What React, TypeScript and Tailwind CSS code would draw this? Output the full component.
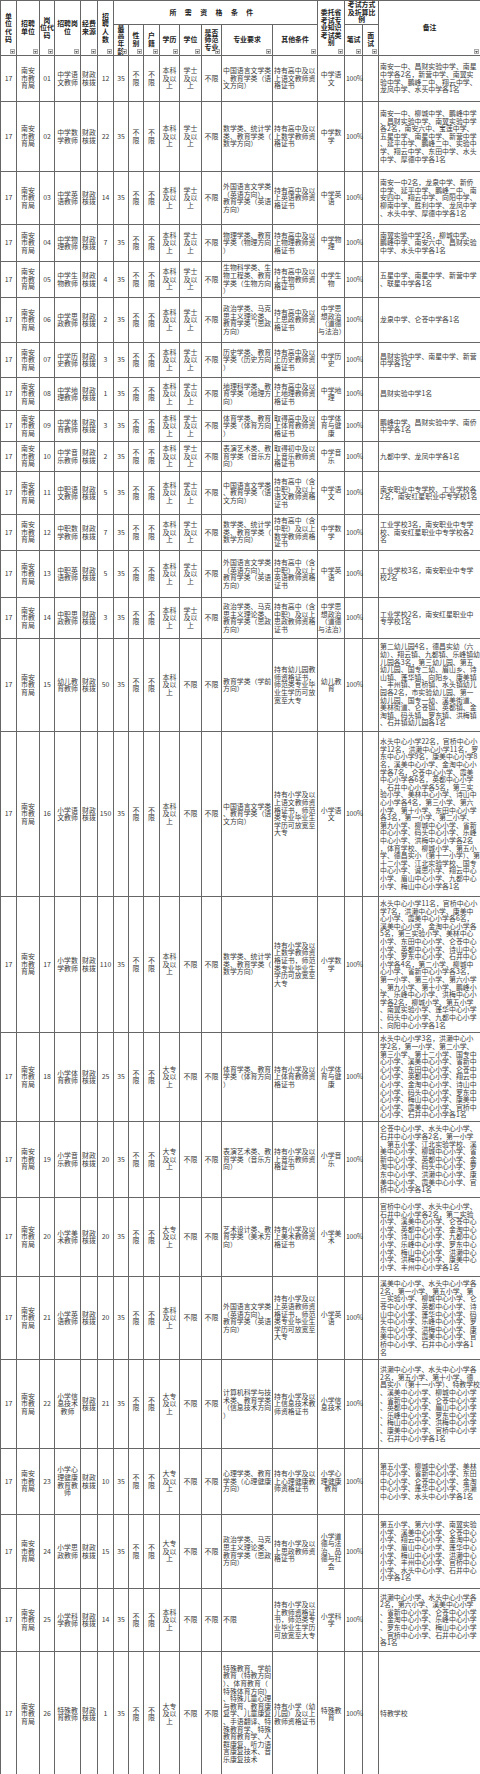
import type { ReactNode } from 'react'

interface Post {
  code: string
  name: string
  count: string
  edu: string
  degree: string
  major: string
  other: string
  category: string
  remark: string
  h: string
}

const BK = '本科\n及以\n上'
const DZ = '大专\n及以\n上'
const XS = '学士\n及以\n上'

const posts: Post[] = [
  { code: '01', name: '中学语\n文教师', count: '12', edu: BK, degree: XS, major: '中国语言文学类、教育学类（语文方向）', other: '持有高中及以上语文教师资格证书', category: '中学语文', remark: '南安一中、昌财实验中学、南星中学各2名，新营中学、南翼实验中学、鹏峰二中、翔云中学、龙凤中学、水头中学各1名', h: 'h-[46px]' },
  { code: '02', name: '中学数\n学教师', count: '22', edu: BK, degree: XS, major: '数学类、统计学类、教育学类（数学方向）', other: '持有高中及以上数学教师资格证书', category: '中学数学', remark: '南安一中、柳城中学、鹏峰中学、昌财实验中学、南翼实验中学各2名，南安六中、宝莲中学、五星中学、南星中学、新营中学、延平中学、鹏峰二中、实验中学、翔云中学、东田中学、水头中学、厚德中学各1名', h: 'h-[70px]' },
  { code: '03', name: '中学英\n语教师', count: '14', edu: BK, degree: XS, major: '外国语言文学类（英语方向）、教育学类（英语方向）', other: '持有高中及以上英语教师资格证书', category: '中学英语', remark: '南安一中2名，龙泉中学、新侨中学、延平中学、鹏峰二中、南安四中、翔云中学、向阳中学、柳南中学、胜利中学、龙凤中学、水头中学、厚德中学各1名', h: 'h-[53px]' },
  { code: '04', name: '中学物\n理教师', count: '7', edu: BK, degree: XS, major: '物理学类、教育学类（物理方向）', other: '持有高中及以上物理教师资格证书', category: '中学物理', remark: '南翼实验中学2名，柳城中学、鹏峰中学、南安六中、昌财实验中学、水头中学各1名', h: 'h-[37px]' },
  { code: '05', name: '中学生\n物教师', count: '4', edu: BK, degree: XS, major: '生物科学类、生物工程类、教育学类（生物方向）', other: '持有高中及以上生物教师资格证书', category: '中学生物', remark: '五星中学、南星中学、新营中学、联星中学各1名', h: 'h-[36px]' },
  { code: '06', name: '中学思\n政教师', count: '2', edu: BK, degree: XS, major: '政治学类、马克思主义理论类、教育学类（思政方向）', other: '持有高中及以上思政教师资格证书', category: '中学思想政治（道德与法治）', remark: '龙泉中学、仑苍中学各1名', h: 'h-[45px]' },
  { code: '07', name: '中学历\n史教师', count: '3', edu: BK, degree: XS, major: '历史学类、教育学类（历史方向）', other: '持有高中及以上历史教师资格证书', category: '中学历史', remark: '昌财实验中学、南星中学、新营中学各1名', h: 'h-[35px]' },
  { code: '08', name: '中学地\n理教师', count: '1', edu: BK, degree: XS, major: '地理科学类、教育学类（地理方向）', other: '持有高中及以上地理教师资格证书', category: '中学地理', remark: '昌财实验中学1名', h: 'h-[33px]' },
  { code: '09', name: '中学体\n育教师', count: '3', edu: BK, degree: XS, major: '体育学类、教育学类（体育方向）', other: '取得高中及以上体育教师资格证书', category: '中学体育与健康', remark: '鹏峰中学、昌财实验中学、南侨中学各1名', h: 'h-[31px]' },
  { code: '10', name: '中学音\n乐教师', count: '2', edu: BK, degree: XS, major: '表演艺术类、教育学类（音乐方向）', other: '取得初中及以上音乐教师资格证书', category: '中学音乐', remark: '九都中学、龙凤中学各1名', h: 'h-[30px]' },
  { code: '11', name: '中职语\n文教师', count: '5', edu: BK, degree: XS, major: '中国语言文学类、教育学类（语文方向）', other: '持有高中（含中职）及以上语文教师资格证书', category: '中学语文', remark: '南安职业中专学校、工业学校各2名，南安红星职业中专学校1名', h: 'h-[43px]' },
  { code: '12', name: '中职数\n学教师', count: '7', edu: BK, degree: XS, major: '数学类、统计学类、教育学类（数学方向）', other: '持有高中（含中职）及以上数学教师资格证书', category: '中学数学', remark: '工业学校3名，南安职业中专学校、南安红星职业中专学校各2名', h: 'h-[36px]' },
  { code: '13', name: '中职英\n语教师', count: '5', edu: BK, degree: XS, major: '外国语言文学类（英语方向）、教育学类（英语方向）', other: '持有高中（含中职）及以上英语教师资格证书', category: '中学英语', remark: '工业学校3名，南安职业中专学校2名', h: 'h-[47px]' },
  { code: '14', name: '中职思\n政教师', count: '3', edu: BK, degree: XS, major: '政治学类、马克思主义理论类、教育学类（思政方向）', other: '持有高中（含中职）及以上思政教师资格证书', category: '中学思想政治（道德与法治）', remark: '工业学校2名，南安红星职业中专学校1名', h: 'h-[41px]' },
  { code: '15', name: '幼儿教\n育教师', count: '50', edu: BK, degree: '不限', major: '教育学类（学前方向）', other: '持有幼儿园教师资格证书，师范类专业毕业生学历可放宽至大专', category: '幼儿教育', remark: '第二幼儿园4名，德昌实幼（六幼）、翔云镇、九都镇、乐峰镇幼儿园各3名，第三幼儿园、第五幼儿园、国专二幼、眉山乡、诗山镇、蓬华镇、向阳乡、康美镇、丰州镇、官桥镇、水头镇幼儿园各2名，市实验幼儿园、第一幼儿园、国专一幼、溪美街道、美林街道、仑苍镇、英都镇、金淘镇、码头镇、罗东镇、洪梅镇、石井镇幼儿园各1名', h: 'h-[93px]' },
  { code: '16', name: '小学语\n文教师', count: '150', edu: BK, degree: '不限', major: '中国语言文学类、教育学类（语文方向）', other: '持有小学及以上语文教师资格证书，师范类专业毕业生学历可放宽至大专', category: '小学语文', remark: '水头中心小学22名，官桥中心小学12名，洪濑中心小学11名，罗东中心小学9名，康美中心小学8名，溪美中心小学、金淘中心小学各7名，仑苍中心小学、霞美中心小学各6名，英都中心小学、石井中心小学各5名，第三实验小学、美林中心小学、诗山中心小学各4名，第三小学、第六小学、第十小学、东田中心小学各3名，第一小学、第二小学、第九小学、柳城中心小学、省新中心小学、码头中心小学、乐峰中心小学、洪梅中心小学各2名，体育学校、柳城小学、第五小学、德昌实小（第十一小学）、第十二小学、江北实验学校、国专中心小学、诚思小学、翔云中心小学、眉山中心小学、九都中心小学、梅山中心小学各1名', h: 'h-[165px]' },
  { code: '17', name: '小学数\n学教师', count: '110', edu: BK, degree: '不限', major: '数学类、统计学类、教育学类（数学方向）', other: '持有小学及以上数学教师资格证书，师范类专业毕业生学历可放宽至大专', category: '小学数学', remark: '水头中心小学11名，官桥中心小学7名，洪濑中心小学、康美中心小学、霞美中心小学各6名，溪美中心小学、金淘中心小学各5名，第三实验小学、美林中心小学、东田中心小学、仑苍中心小学、英都中心小学、诗山中心小学、罗东中心小学、石井中心小学各4名，第二小学、柳城中心小学、省新中心小学各3名，第一小学、第三小学、第六小学、第九小学、第十小学、鹏峰小学、乐峰中心小学、洪梅中心小学各2名，柳城小学、第五小学、南翼实验小学、蓬华中心小学、码头中心小学、九都中心小学、向阳中心小学各1名', h: 'h-[136px]' },
  { code: '18', name: '小学体\n育教师', count: '25', edu: DZ, degree: '不限', major: '体育学类、教育学类（体育方向）', other: '持有小学及以上体育教师资格证书', category: '小学体育与健康', remark: '水头中心小学3名，洪濑中心小学2名，第一小学、第二小学、第三小学、第十二小学、国专中心小学、溪美中心小学、省新中心小学、东田中心小学、仑苍中心小学、英都中心小学、翔云中心小学、金淘中心小学、诗山中心小学、码头中心小学、罗东中心小学、梅山中心小学、康美中心小学、霞美中心小学、官桥中心小学、石井中心小学各1名', h: 'h-[89px]' },
  { code: '19', name: '小学音\n乐教师', count: '20', edu: DZ, degree: '不限', major: '表演艺术类、教育学类（音乐方向）', other: '持有小学及以上音乐教师资格证书', category: '小学音乐', remark: '仑苍中心小学、水头中心小学、石井中心小学各2名，第一小学、第五小学、江北实验学校、溪美中心小学、柳城中心小学、省新中心小学、英都中心小学、金淘中心小学、码头中心小学、罗东中心小学、洪濑中心小学、康美中心小学、霞美中心小学、官桥中心小学各1名', h: 'h-[76px]' },
  { code: '20', name: '小学美\n术教师', count: '20', edu: DZ, degree: '不限', major: '艺术设计类、教育学类（美术方向）', other: '持有小学及以上美术教师资格证书', category: '小学美术', remark: '官桥中心小学、水头中心小学、石井中心小学各2名，第二实验小学、溪美中心小学、仑苍中心小学、英都中心小学、金淘中心小学、诗山中心小学、九都中心小学、乐峰中心小学、罗东中心小学、梅山中心小学、洪濑中心小学、洪梅中心小学、康美中心小学、丰州中心小学各1名', h: 'h-[79px]' },
  { code: '21', name: '小学英\n语教师', count: '20', edu: BK, degree: '不限', major: '外国语言文学类（英语方向）、教育学类（英语方向）', other: '持有小学及以上英语教师资格证书，师范类专业毕业生学历可放宽至大专', category: '小学英语', remark: '溪美中心小学、水头中心小学各2名，第一小学、第五小学、第三实验小学、柳城中心小学、仑苍中心小学、英都中心小学、诗山中心小学、蓬华中心小学、码头中心小学、乐峰中心小学、罗东中心小学、洪梅中心小学、康美中心小学、霞美中心小学、官桥中心小学、石井中心小学各1名', h: 'h-[83px]' },
  { code: '22', name: '小学信\n息技术\n教师', count: '21', edu: DZ, degree: '不限', major: '计算机科学与技术类、教育学类（信息技术方向）', other: '持有小学及以上信息技术教师资格证书', category: '小学信息技术', remark: '洪濑中心小学、水头中心小学各2名，第五小学、第十小学、德昌实小（第十一小学）、特教学校、溪美中心小学、柳城中心小学、省新中心小学、仑苍中心小学、英都中心小学、眉山中心小学、乐峰中心小学、罗东中心小学、梅山中心小学、洪梅中心小学、康美中心小学、官桥中心小学、石井中心小学各1名', h: 'h-[89px]' },
  { code: '23', name: '小学心\n理健康\n教育教\n师', count: '10', edu: DZ, degree: '不限', major: '心理学类、教育学类（心理健康方向）', other: '持有小学及以上心理健康教师资格证书', category: '小学心理健康教育', remark: '第五小学、柳城中心小学、美林中心小学、省新中心小学、东田中心小学、仑苍中心小学、金淘中心小学、蓬华中心小学、洪濑中心小学、水头中心小学各1名', h: 'h-[66px]' },
  { code: '24', name: '小学思\n政教师', count: '15', edu: DZ, degree: '不限', major: '政治学类、马克思主义理论类、教育学类（思政方向）', other: '持有小学及以上思政教师资格证书', category: '小学道德与法治、品德与社会', remark: '第五小学、第六小学、南翼实验小学、溪美中心小学、仑苍中心小学、翔云中心小学、金淘中心小学、眉山中心小学、蓬华中心小学、梅山中心小学、洪濑中心小学、丰州中心小学、官桥中心小学、水头中心小学、石井中心小学各1名', h: 'h-[74px]' },
  { code: '25', name: '小学科\n学教师', count: '14', edu: BK, degree: '不限', major: '不限', other: '持有小学及以上教师资格证书，师范类专业毕业生学历可放宽至大专', category: '小学科学', remark: '洪濑中心小学、水头中心小学各2名，第六小学、溪美中心小学、省新中心小学、仑苍中心小学、金淘中心小学、乐峰中心小学、罗东中心小学、梅山中心小学、官桥中心小学、石井中心小学各1名', h: 'h-[63px]' },
  { code: '26', name: '特殊教\n育教师', count: '1', edu: DZ, degree: '不限', major: '特殊教育、学前教育（特教方向）、体育教育（特殊体育方向）、特殊儿童心理与教育、教育康复学、儿童康复、手语翻译、特殊教育学、特殊教育教育学、人群康复、听力语言康复技术、音乐康复技术', other: '持有小学（幼儿园）及以上教师资格证书', category: '特殊教育', remark: '特教学校', h: 'h-[125px]' },
]

function Th({ children, rowSpan, colSpan, filter = true, className = '' }: { children: ReactNode; rowSpan?: number; colSpan?: number; filter?: boolean; className?: string }) {
  return (
    <th
      rowSpan={rowSpan}
      colSpan={colSpan}
      className={`relative border border-[#666] p-0 align-middle text-center font-bold text-[#222] whitespace-pre-line ${className}`}
    >
      {children}
      {filter && (
        <span className="absolute right-[1px] bottom-[1px] flex h-[5px] w-[5px] items-center justify-center border border-[#aaa] bg-[#f3f3f3]">
          <svg width="3" height="2" viewBox="0 0 3 2"><path d="M0 0h3L1.5 2z" fill="#555" /></svg>
        </span>
      )}
    </th>
  )
}

function Td({ children, left = false, nowrap = false }: { children: ReactNode; left?: boolean; nowrap?: boolean }) {
  return (
    <td
      className={`border border-[#666] p-0 align-middle ${nowrap ? 'whitespace-nowrap tracking-[-0.3px]' : 'whitespace-pre-line'} ${left ? 'text-left pl-[1px]' : 'text-center'}`}
    >
      {children}
    </td>
  )
}

export default function App() {
  return (
    <div className="w-[480px] bg-white text-[#3a3a3a]" style={{ fontFamily: '"Noto Sans CJK SC", "Noto Sans", sans-serif' }}>
      <table className="w-[480px] table-fixed border-collapse text-[6.9px] leading-[7.6px] [line-break:anywhere]">
        <colgroup>
          <col className="w-[16px]" />
          <col className="w-[23px]" />
          <col className="w-[15px]" />
          <col className="w-[26px]" />
          <col className="w-[17px]" />
          <col className="w-[16px]" />
          <col className="w-[15px]" />
          <col className="w-[15px]" />
          <col className="w-[16px]" />
          <col className="w-[20px]" />
          <col className="w-[22px]" />
          <col className="w-[20px]" />
          <col className="w-[51px]" />
          <col className="w-[45px]" />
          <col className="w-[27px]" />
          <col className="w-[18px]" />
          <col className="w-[16px]" />
          <col className="w-[102px]" />
        </colgroup>
        <thead>
          <tr className="h-[23px]">
            <Th rowSpan={2}>{'单\n位\n代\n码'}</Th>
            <Th rowSpan={2}>{'招聘\n单位'}</Th>
            <Th rowSpan={2}>{'岗\n位代\n码'}</Th>
            <Th rowSpan={2}>{'招聘岗\n位'}</Th>
            <Th rowSpan={2}>{'经费\n来源'}</Th>
            <Th rowSpan={2}>{'招\n聘\n人\n数'}</Th>
            <Th colSpan={8} filter={false} className="tracking-[8.5px]">所需资格条件</Th>
            <Th rowSpan={2}>{'委托省\n考试专\n业知识\n考试类\n别'}</Th>
            <Th colSpan={2} filter={false}>{'考试方式\n及折算比\n例'}</Th>
            <Th rowSpan={2}>备注</Th>
          </tr>
          <tr className="h-[29px]">
            <Th>{'最\n高\n年\n龄'}</Th>
            <Th>{'性\n别'}</Th>
            <Th>{'户\n籍'}</Th>
            <Th>学历</Th>
            <Th>学位</Th>
            <Th>{'是否\n师范\n专业'}</Th>
            <Th>专业要求</Th>
            <Th>其他条件</Th>
            <Th>笔试</Th>
            <Th>{'面\n试'}</Th>
          </tr>
        </thead>
        <tbody>
          {posts.map((p) => (
            <tr key={p.code} className={p.h}>
              <Td>17</Td>
              <Td>{'南安\n市教\n育局'}</Td>
              <Td>{p.code}</Td>
              <Td>{p.name}</Td>
              <Td>{'财政\n核拨'}</Td>
              <Td>{p.count}</Td>
              <Td>35</Td>
              <Td>{'不\n限'}</Td>
              <Td>{'不\n限'}</Td>
              <Td>{p.edu}</Td>
              <Td>{p.degree}</Td>
              <Td>不限</Td>
              <Td left>{p.major}</Td>
              <Td left>{p.other}</Td>
              <Td>{p.category}</Td>
              <Td left nowrap>100%</Td>
              <Td>{''}</Td>
              <Td left>{p.remark}</Td>
            </tr>
          ))}
        </tbody>
      </table>
    </div>
  )
}
